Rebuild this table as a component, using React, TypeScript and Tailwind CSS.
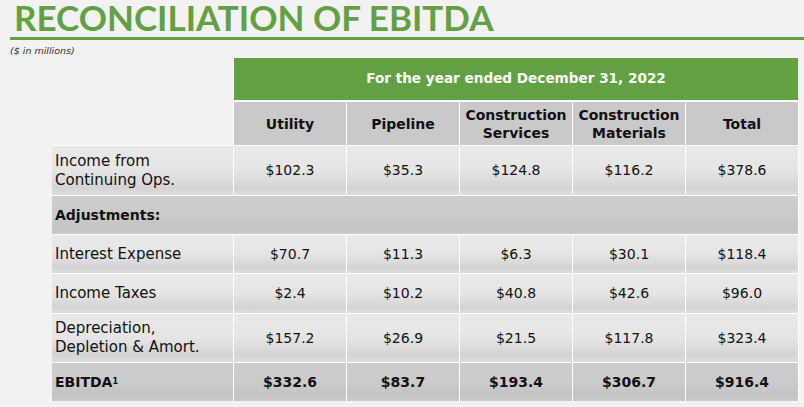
import React from "react";

const cols = ["Utility", "Pipeline", "Construction Services", "Construction Materials", "Total"];

type Row = {
  label: React.ReactNode;
  values?: string[];
  h: string;
  kind: "plain" | "section" | "total";
};

const rows: Row[] = [
  { label: <>Income from<br />Continuing Ops.</>, values: ["$102.3", "$35.3", "$124.8", "$116.2", "$378.6"], h: "h-[49px]", kind: "plain" },
  { label: "Adjustments:", h: "h-[38px]", kind: "section" },
  { label: "Interest Expense", values: ["$70.7", "$11.3", "$6.3", "$30.1", "$118.4"], h: "h-[38px]", kind: "plain" },
  { label: "Income Taxes", values: ["$2.4", "$10.2", "$40.8", "$42.6", "$96.0"], h: "h-[39px]", kind: "plain" },
  { label: <>Depreciation,<br />Depletion &amp; Amort.</>, values: ["$157.2", "$26.9", "$21.5", "$117.8", "$323.4"], h: "h-[48px]", kind: "plain" },
  { label: <>EBITDA<sup className="text-[8px] relative -top-[3px]">1</sup></>, values: ["$332.6", "$83.7", "$193.4", "$306.7", "$916.4"], h: "h-[38px]", kind: "total" },
];

const plainBg = "bg-[linear-gradient(180deg,#e9e9e9_0%,#e5e5e5_50%,#d4d4d4_85%,#dddddd_100%)]";
const darkBg = "bg-[linear-gradient(180deg,#cdcdcd_0%,#cbcbcb_50%,#c4c4c4_85%,#cacaca_100%)]";

const App: React.FC = () => {
  return (
    <div className="w-[804px] h-[407px] bg-[#f2f2f2] overflow-hidden font-['DejaVu_Sans',sans-serif] text-[#111]">
      {/* Title */}
      <h1 className="pl-[14px] h-[37px] text-[#62a044] font-['Lato',sans-serif] font-bold text-[35px] leading-[34px] whitespace-nowrap">
        RECONCILIATION OF EBITDA
      </h1>
      <div className="ml-[10px] h-[3px] bg-[#62a044]" />
      <div className="pl-[10px] mt-[5px] h-[12px] text-[9.5px] leading-[12px] italic text-[#333]">($ in millions)</div>

      <div className="ml-[52px] w-[747px]">
        {/* Header */}
        <div className="flex">
          <div className="w-[181px]" />
          <div className="flex-1 bg-white pt-px pr-px pl-px flex flex-col gap-[2px]">
            <div className="h-[42px] bg-[#62a044] text-white font-bold text-[13.6px] flex items-center justify-center pb-[2px]">
              For the year ended December 31, 2022
            </div>
            <div className="grid grid-cols-5 gap-px">
              {cols.map((c) => (
                <div key={c} className="h-[43px] bg-[#c9c9c9] font-bold text-[14px] leading-[18px] text-center flex items-center justify-center">
                  {c.includes(" ") ? (
                    <span>{c.split(" ")[0]}<br />{c.split(" ")[1]}</span>
                  ) : c}
                </div>
              ))}
            </div>
          </div>
        </div>

        {/* Body */}
        <div className="grid grid-cols-[181px_repeat(5,1fr)] gap-px bg-white pt-px pr-px">
          {rows.map((r, i) =>
            r.kind === "section" ? (
              <div key={i} className={`col-span-6 ${r.h} ${darkBg} flex items-center px-[3px] font-bold text-[14px]`}>
                {r.label}
              </div>
            ) : (
              <React.Fragment key={i}>
                <div className={`${r.h} ${r.kind === "total" ? darkBg + " font-bold text-[14px]" : plainBg + " text-[15px]"} flex items-center px-[3px] leading-[19px]`}>
                  <span>{r.label}</span>
                </div>
                {r.values!.map((v, j) => (
                  <div key={j} className={`${r.h} ${r.kind === "total" ? darkBg + " font-bold" : plainBg} flex items-center justify-center text-[14px]`}>
                    {v}
                  </div>
                ))}
              </React.Fragment>
            )
          )}
        </div>
      </div>
    </div>
  );
};

export default App;
